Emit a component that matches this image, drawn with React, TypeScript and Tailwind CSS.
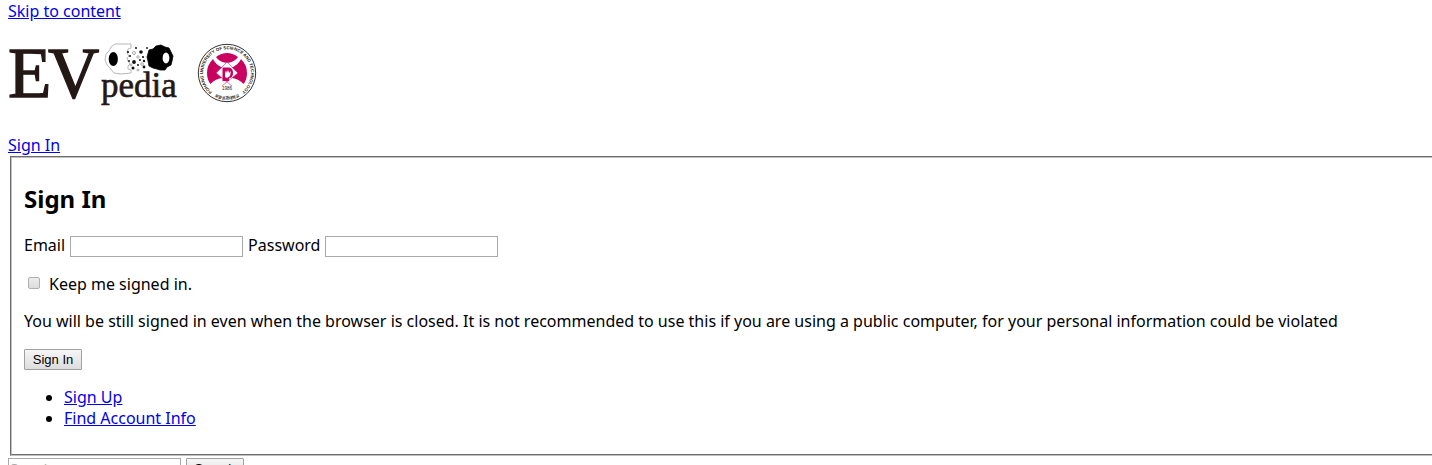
import type { ReactNode } from "react";

const boxClass = "h-[21px] w-[173px] border border-[#a9a9a9] bg-white px-px text-[13px] placeholder:text-[#a9a9a9]";
const buttonClass =
  "h-[21px] w-[58px] rounded-[1px] border border-[#a0a0a0] bg-linear-to-b from-[#f6f6f6] to-[#dddddd] font-['Liberation_Sans',sans-serif] text-[13px] leading-[19px]";

function TextLink({ href, children }: { href: string; children: ReactNode }) {
  return (
    <a href={href} className="text-[#0000ee] underline">
      {children}
    </a>
  );
}

function EvpediaLogo() {
  return (
    <svg width="172" height="66" viewBox="8 43 172 66" overflow="visible" role="img" aria-label="EVpedia">
      <g fill="#231815" stroke="#231815" fontFamily="'Liberation Serif', serif">
        <text x="8" y="97" fontSize="71" strokeWidth="1.3">E</text>
        <text x="48" y="97" fontSize="71" strokeWidth="1.3">V</text>
        <text x="101" y="97" fontSize="35" strokeWidth="0.6">pedia</text>
      </g>
      <path
        d="M131 44 L115 44 L111 47 L109 51 L106 54 L105 60 L107 65 L110 68 L114 73 L121 74 L131 73 L131 70 L128 69 L128 66 L130 64 L128 61 L127 58 L129 56 L127 53 L128 49 L131 48 Z"
        fill="#fff"
        stroke="#b0b0b0"
        strokeWidth="0.9"
      />
      <ellipse cx="113.3" cy="59" rx="4.6" ry="7" fill="#000" />
      <g fill="#111">
        <circle cx="128" cy="52" r="1.1" />
        <circle cx="130" cy="56" r="1" />
        <circle cx="136" cy="48" r="1" />
        <circle cx="141" cy="52" r="1.8" />
        <circle cx="147" cy="48" r="0.9" />
        <circle cx="134" cy="62" r="1.9" />
        <circle cx="140" cy="60" r="1" />
        <circle cx="143" cy="57" r="1.1" />
        <circle cx="133" cy="68" r="1.5" />
        <circle cx="138" cy="65" r="1" />
        <circle cx="144" cy="67" r="1.4" />
        <circle cx="144" cy="61" r="1.2" />
        <circle cx="129" cy="61" r="0.9" />
      </g>
      <g fill="#fff" stroke="#888" strokeWidth="0.7">
        <circle cx="134" cy="53" r="1.5" />
        <circle cx="138" cy="57" r="1.2" />
        <circle cx="142" cy="64" r="1.3" />
        <circle cx="131" cy="65" r="1" />
        <circle cx="138" cy="70" r="1" />
      </g>
      <path
        d="M149 50 L153 49 L156 46 L161 45 L165 47 L169 48 L171 52 L173 56 L172 61 L171 65 L167 67 L165 70 L160 70 L157 69 L153 68 L149 66 L148 61 L147 57 Z"
        fill="#000"
        stroke="#000"
        strokeWidth="0.8"
        strokeLinejoin="round"
      />
      <ellipse cx="166" cy="58" rx="3.4" ry="5.4" fill="#fff" />
    </svg>
  );
}

function UniversitySeal() {
  return (
    <svg width="60" height="60" viewBox="0 0 60 60" overflow="visible" role="img" aria-label="Pohang University of Science and Technology, 1986">
      <defs>
        <path id="seal-ring" d="M14.3 48.1 A23.9 23.9 0 1 1 45.7 48.1" />
        <path id="seal-base" d="M11.6 49.4 A26.8 26.8 0 0 0 48.4 49.4" />
      </defs>
      <circle cx="30" cy="30" r="28.7" fill="#fff" stroke="#333" strokeWidth="1" />
      <g fill="#231815" fontFamily="'Liberation Sans', sans-serif" fontWeight="700">
        <text fontSize="4.4">
          <textPath href="#seal-ring" startOffset="50%" textAnchor="middle">POHANG UNIVERSITY OF SCIENCE AND TECHNOLOGY</textPath>
        </text>
        <text fontSize="4" fontFamily="'Noto Sans CJK KR', sans-serif">
          <textPath href="#seal-base" startOffset="50%" textAnchor="middle">포항공과대학교</textPath>
        </text>
      </g>
      <g fill="#c9005f">
        <path d="M19 14 Q30 6 41 14 Q38 19 30 20 Q22 19 19 14 Z" />
        <path d="M16 16 Q10 22 10 30 Q10 37 13.5 41 Q18 36 25 35 L19.5 30 L25 24.5 Q18 21 16 16 Z" />
        <path d="M44 16 Q50 22 50 30 Q50 37 46.5 41 Q42 36 35 35 L40.5 30 L35 24.5 Q42 21 44 16 Z" />
      </g>
      <path d="M30 19 L41 30 L25 43 M30 19 L19 30 L35 43" fill="none" stroke="#d0488a" strokeWidth="0.7" />
      <path d="M25.5 24.5 H32 Q36 25 36 30 Q36 35 32 35 V38 H25.5 Z" fill="#c9005f" />
      <path d="M28 34 V30 L29 27.5 L30 30 L31 26.5 L32 30 L34 28 L33 33 L30 35 Z" fill="#fff" />
      <text x="30" y="47" textAnchor="middle" fontSize="4.6" fontFamily="'Liberation Sans', sans-serif" fill="#231815">
        1986
      </text>
    </svg>
  );
}

export default function App() {
  return (
    <div className="overflow-x-hidden bg-white pt-px font-['Noto_Sans',sans-serif] text-[16px] leading-[21px] text-black">
      <header className="px-2">
        <TextLink href="#content">Skip to content</TextLink>
        <h1 className="mt-[21px] flex h-[92px] items-start gap-[17px]">
          <EvpediaLogo />
          <UniversitySeal />
        </h1>
        <TextLink href="#sign-in">Sign In</TextLink>
      </header>
      <main id="content">
        <form id="sign-in" className="ml-[10px] border-y-2 border-l-2 border-[#c0c0c0] [border-style:groove] border-r-0 pb-[25px] pl-3">
          <h2 className="mt-[25px] text-[24px] leading-8 font-bold">Sign In</h2>
          <div className="mt-[21px] flex items-start gap-[5px] leading-[19px]">
            <label htmlFor="email">Email</label>
            <input id="email" type="email" className={boxClass} />
            <label htmlFor="password">Password</label>
            <input id="password" type="password" className={boxClass} />
          </div>
          <div className="mt-[17px] flex items-start gap-[9px] pl-1">
            <input
              id="keep"
              type="checkbox"
              className="mt-[3px] size-3 appearance-none rounded-[2px] border border-[#b0b0b0] bg-linear-to-b from-[#ebebeb] to-[#dcdcdc]"
            />
            <label htmlFor="keep">Keep me signed in.</label>
          </div>
          <p className="mt-4 whitespace-nowrap">
            You will be still signed in even when the browser is closed. It is not recommended to use this if you are using a public computer, for your personal information could be violated
          </p>
          <button type="submit" className={`mt-[17px] block ${buttonClass}`}>
            Sign In
          </button>
          <ul className="mt-[17px] list-disc pl-10">
            <li>
              <TextLink href="#sign-up">Sign Up</TextLink>
            </li>
            <li>
              <TextLink href="#find-account">Find Account Info</TextLink>
            </li>
          </ul>
        </form>
        <form role="search" className="mt-0.5 flex gap-[5px] px-2">
          <input type="search" aria-label="Search" placeholder="Search" className={`${boxClass} font-['Liberation_Sans',sans-serif]`} />
          <button type="submit" className={buttonClass}>
            Search
          </button>
        </form>
      </main>
    </div>
  );
}
